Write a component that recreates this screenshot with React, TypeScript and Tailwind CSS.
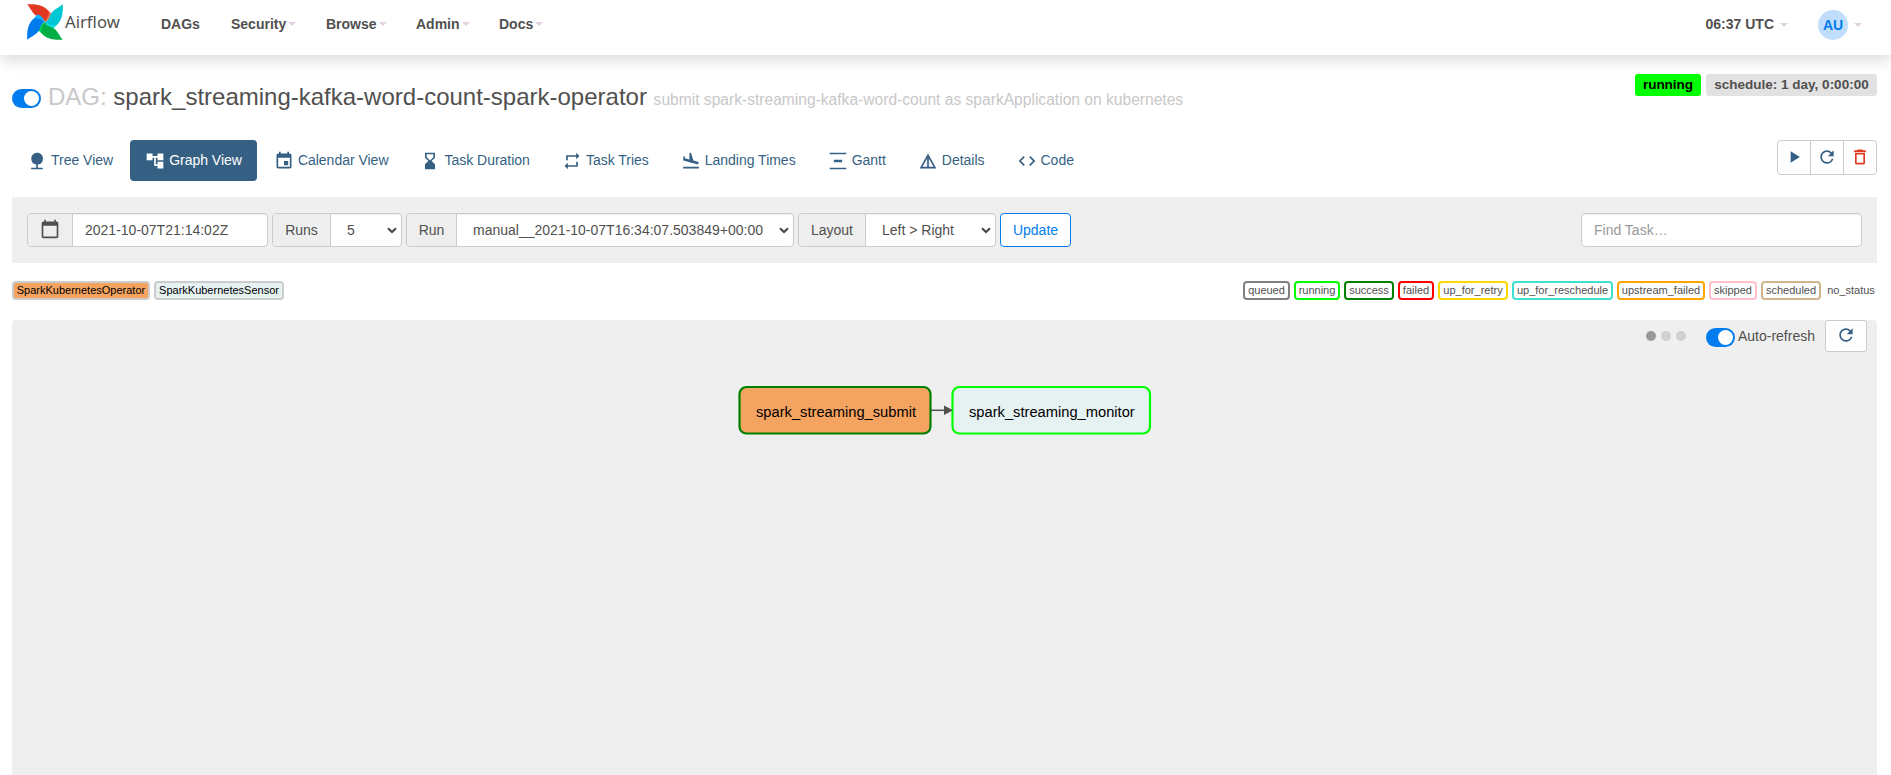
import React from "react";
import {
  MdNature, MdAccountTree, MdEvent, MdHourglassBottom, MdRepeat, MdFlightLand, MdVerticalDistribute,
  MdDetails, MdCode, MdPlayArrow, MdRefresh, MdDeleteOutline, MdCalendarToday,
} from "react-icons/md";

const Caret = ({ className = "" }: { className?: string }) => (
  <span className={`inline-block h-0 w-0 border-x-4 border-t-4 border-x-transparent border-t-[#e2d2e2] ${className}`} />
);

const Blade = ({ turn, dark, light }: { turn: number; dark: string; light: string }) => (
  <g transform={`rotate(${turn} 18 18)`}>
    <path d="M18 18 L20 6 C22.500 7.500 24.500 9 25.600 10.600 C25 14 22 15.500 18 18Z" fill={light} />
    <path d="M0.200 0.200 C9 -0.200 16.500 1 21.300 6.500 C23 10 20.500 14 18 18 C16.500 14.500 14 13.800 11.300 12.800 C5.500 10.500 4 4.500 0.200 0.200Z" fill={dark} />
  </g>
);

const Logo = () => (
  <svg width="36" height="36" viewBox="0 0 36 36">
    <Blade turn={0} dark="#e43921" light="#ff7557" />
    <Blade turn={90} dark="#00c7d4" light="#11e1ee" />
    <Blade turn={180} dark="#00ad46" light="#04d659" />
    <Blade turn={270} dark="#017cee" light="#0cb6ff" />
  </svg>
);

const Toggle = () => (
  <span className="flex h-[19px] w-[29px] shrink-0 items-center justify-end rounded-full bg-[#017cee] pr-0.5">
    <span className="h-[15px] w-[15px] rounded-full bg-white" />
  </span>
);

const menus = [
  { label: "Security", width: "w-[95px]" },
  { label: "Browse", width: "w-[90px]" },
  { label: "Admin", width: "w-[83px]" },
  { label: "Docs", width: "w-[70px]" },
];

const tabs = [
  { label: "Tree View", Icon: MdNature },
  { label: "Graph View", Icon: MdAccountTree, active: true },
  { label: "Calendar View", Icon: MdEvent },
  { label: "Task Duration", Icon: MdHourglassBottom },
  { label: "Task Tries", Icon: MdRepeat },
  { label: "Landing Times", Icon: MdFlightLand },
  { label: "Gantt", Icon: MdVerticalDistribute },
  { label: "Details", Icon: MdDetails },
  { label: "Code", Icon: MdCode },
];

const states = [
  { label: "queued", style: "w-[47px] border-[#808080]" },
  { label: "running", style: "w-[46px] border-[#00ff00]" },
  { label: "success", style: "w-[50px] border-[#008000]" },
  { label: "failed", style: "w-[36px] border-[#ff0000]" },
  { label: "up_for_retry", style: "w-[70px] border-[#ffd700]" },
  { label: "up_for_reschedule", style: "w-[101px] border-[#40e0d0]" },
  { label: "upstream_failed", style: "w-[88px] border-[#ffa500]" },
  { label: "skipped", style: "w-[48px] border-[#ffc0cb]" },
  { label: "scheduled", style: "w-[60px] border-[#d2b48c]" },
  { label: "no_status", style: "w-[52px] border-transparent" },
];

const Chevron = () => (
  <svg width="10" height="7" viewBox="0 0 10 7" className="shrink-0">
    <path d="M1 1.200 L5 5 L9 1.200" fill="none" stroke="#454545" strokeWidth="2" />
  </svg>
);

const SelectGroup = ({ label, value, addon, field }: { label: string; value: string; addon: string; field: string }) => (
  <div className="flex h-[34px] overflow-hidden rounded border border-[#ccc] bg-white">
    <span className={`flex items-center justify-center border-r border-[#ccc] bg-[#eee] ${addon}`}>{label}</span>
    <span className={`flex items-center justify-between pr-1 pl-4 whitespace-nowrap shadow-[inset_0_1px_1px_rgba(0,0,0,0.075)] ${field}`}>
      {value}
      <Chevron />
    </span>
  </div>
);

export default function App() {
  return (
    <div className="flex h-[775px] w-full flex-col overflow-hidden bg-white font-['Liberation_Sans',Arial,sans-serif] text-sm text-[#51504f]">
      <header className="flex h-[55px] shrink-0 items-start justify-between bg-white pr-[29px] pl-[27px] shadow-[0_5px_15px_rgba(0,0,0,0.15)]">
        <div className="flex">
          <div className="flex w-[134px] gap-0.5 pt-1">
            <Logo />
            <span className="pt-1.5 font-['Noto_Sans',sans-serif] text-[16.7px] leading-6">Airflow</span>
          </div>
          <nav className="flex items-start pt-[14px] leading-5 font-bold">
            <span className="w-[70px]">DAGs</span>
            {menus.map((m) => (
              <span key={m.label} className={`flex h-5 items-center gap-0.5 ${m.width}`}>
                {m.label}
                <Caret />
              </span>
            ))}
          </nav>
        </div>
        <div className="flex items-center pt-2.5 font-bold">
          <span className="pb-0.5">06:37 UTC</span>
          <Caret className="ml-1.5" />
          <span className="ml-[30px] flex h-[30px] w-[30px] items-center justify-center rounded-full bg-[#c0ddfb] text-[#017cee]">AU</span>
          <Caret className="ml-1.5" />
        </div>
      </header>

      <main className="flex min-h-0 flex-1 flex-col pr-[14px] pl-3">
        <div className="flex h-[85px] shrink-0 items-start justify-between pt-[19px]">
          <div className="flex pt-[15px]">
            <Toggle />
            <h3 className="-mt-[7px] ml-[7px] text-2xl leading-[30px] whitespace-nowrap">
              <span className="text-[#c8c8c8]">DAG:</span> spark_streaming-kafka-word-count-spark-operator{" "}
              <span className="text-[15.6px] text-[#c8c8c8]">submit spark-streaming-kafka-word-count as sparkApplication on kubernetes</span>
            </h3>
          </div>
          <div className="flex gap-[5px] text-[13.5px] leading-[21px] font-bold">
            <span className="flex h-[22px] w-[66px] justify-center rounded-[3px] bg-[#00ff00] text-black">running</span>
            <span className="flex h-[22px] w-[171px] justify-center rounded-[3px] bg-[#e2e2e2]">schedule: 1 day, 0:00:00</span>
          </div>
        </div>

        <div className="flex h-[57px] shrink-0 items-start justify-between">
          <div className="flex gap-0.5 tracking-[-0.015px]">
            {tabs.map(({ label, Icon, active }) => (
              <a key={label} className={`flex h-[41px] items-center gap-1 rounded px-[15px] ${active ? "bg-[#365f84] text-white" : "text-[#365f84]"}`}>
                <Icon size={20} />
                <span className="pb-px">{label}</span>
              </a>
            ))}
          </div>
          <div className="flex h-[35px] w-[100px] divide-x divide-[#ccc] rounded border border-[#ccc] text-[#365f84]">
            <span className="flex flex-1 items-center justify-center pb-px"><MdPlayArrow size={20} /></span>
            <span className="flex flex-1 items-center justify-center pb-px"><MdRefresh size={20} /></span>
            <span className="flex flex-1 items-center justify-center pb-px text-[#e43921]"><MdDeleteOutline size={20} /></span>
          </div>
        </div>

        <div className="flex h-[66px] shrink-0 items-center justify-between bg-[#efefef] px-[15px]">
          <div className="flex gap-1">
            <div className="flex h-[34px] w-[241px] overflow-hidden rounded border border-[#ccc] bg-white">
              <span className="flex w-[45px] items-center justify-center border-r border-[#ccc] bg-[#eee] pb-0.5"><MdCalendarToday size={20} /></span>
              <span className="flex flex-1 items-center pl-3 shadow-[inset_0_1px_1px_rgba(0,0,0,0.075)]">2021-10-07T21:14:02Z</span>
            </div>
            <SelectGroup label="Runs" value="5" addon="w-[58px]" field="w-[70px]" />
            <SelectGroup label="Run" value="manual__2021-10-07T16:34:07.503849+00:00" addon="w-[50px]" field="w-[336px]" />
            <SelectGroup label="Layout" value="Left > Right" addon="w-[67px]" field="w-[129px]" />
            <button className="h-[34px] w-[71px] rounded border border-[#017cee] bg-white text-[#017cee]">Update</button>
          </div>
          <div className="flex h-[34px] w-[281px] items-center rounded border border-[#ccc] bg-white pl-3 text-[#999] shadow-[inset_0_1px_1px_rgba(0,0,0,0.075)]">Find Task…</div>
        </div>

        <div className="flex h-[57px] shrink-0 items-start justify-between pt-[18px] text-[11px] leading-[15px]">
          <div className="flex gap-1 text-black">
            <span className="flex h-[19px] w-[138px] justify-center rounded border-2 border-[#ccc] bg-[#f4a460]">SparkKubernetesOperator</span>
            <span className="flex h-[19px] w-[130px] justify-center rounded border-2 border-[#ccc] bg-[#e6f1f2]">SparkKubernetesSensor</span>
          </div>
          <div className="flex gap-1">
            {states.map((s) => (
              <span key={s.label} className={`flex h-[19px] justify-center rounded border-2 ${s.style}`}>{s.label}</span>
            ))}
          </div>
        </div>

        <section className="flex min-h-0 flex-1 flex-col rounded-t bg-[#efefef]">
          <div className="flex h-[33px] shrink-0 justify-end pr-2.5">
            <div className="mr-5 flex items-center gap-[5px] pb-0.5">
              <span className="h-2.5 w-2.5 rounded-full bg-[#999]" />
              <span className="h-2.5 w-2.5 rounded-full bg-[#d0d0d0]" />
              <span className="h-2.5 w-2.5 rounded-full bg-[#d0d0d0]" />
            </div>
            <div className="flex pt-2"><Toggle /></div>
            <span className="mr-2.5 ml-[3px] pt-1.5 leading-5">Auto-refresh</span>
            <span className="flex h-8 w-[42px] items-center justify-center rounded-[3px] border border-[#ccc] bg-white pb-0.5 text-[#365f84]"><MdRefresh size={20} /></span>
          </div>
          <svg width="1865" height="422" viewBox="12 353 1865 422" className="shrink-0 font-['Liberation_Sans',Arial,sans-serif] text-[14.7px]">
            <rect x="739.500" y="387" width="191" height="46.500" rx="7" fill="#f4a460" stroke="#008000" strokeWidth="2.200" />
            <rect x="952.500" y="387" width="197.500" height="46.500" rx="7" fill="#e6f1f2" stroke="#00ff00" strokeWidth="2.200" />
            <path d="M931 410.300H946" stroke="#51504f" strokeWidth="1.500" />
            <path d="M944 405.500L953 410.300L944 415Z" fill="#51504f" />
            <text x="756" y="417" fill="#000">spark_streaming_submit</text>
            <text x="969" y="417" fill="#000">spark_streaming_monitor</text>
          </svg>
        </section>
      </main>
    </div>
  );
}
